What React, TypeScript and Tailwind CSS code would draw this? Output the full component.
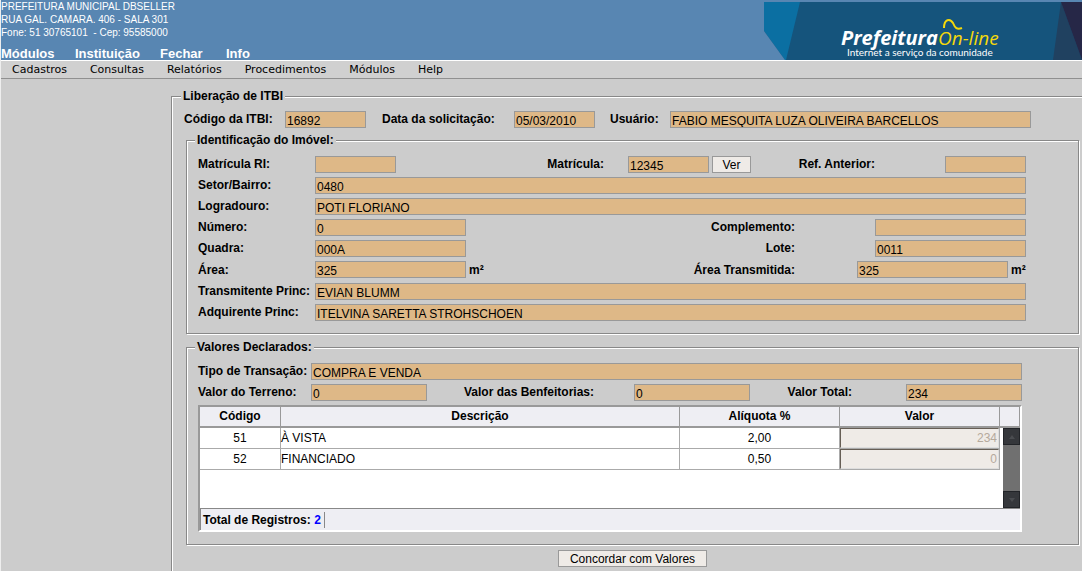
import type { InputHTMLAttributes, ReactNode } from 'react';

type FieldProps = InputHTMLAttributes<HTMLInputElement> & { id: string };

function Field({ className = '', ...rest }: FieldProps) {
  return (
    <input
      readOnly
      className={`h-[17px] min-w-0 rounded-none border border-[#999999] bg-[#deb887] px-px pt-[2px] text-[12px] leading-[13px] text-black outline-none ${className}`}
      {...rest}
    />
  );
}

function Label({ htmlFor, className = '', children }: { htmlFor: string; className?: string; children: ReactNode }) {
  return (
    <label htmlFor={htmlFor} className={`shrink-0 font-bold whitespace-nowrap ${className}`}>
      {children}
    </label>
  );
}

function Group({ title, className = '', children }: { title: string; className?: string; children: ReactNode }) {
  return (
    <fieldset
      className={`min-w-0 border border-[#888888] shadow-[1px_1px_0_#ffffff,inset_1px_1px_0_#ffffff] ${className}`}
    >
      <legend className="bg-[#cccccc] px-[2px] font-bold">{title}</legend>
      {children}
    </fieldset>
  );
}

function Banner() {
  return (
    <svg viewBox="0 0 318 58" className="h-[58px] w-[318px] shrink-0" role="img" aria-label="Prefeitura On-line">
      <rect width="318" height="58" fill="#15547c" />
      <polygon points="0,0 36,0 22,58 21,58 0,29" fill="#0b6fa2" />
      <polygon points="0,29 21,58 0,58" fill="#5886b2" />
      <polygon points="297,0 318,58 289,58" fill="#204160" />
      <polygon points="297,0 318,0 318,58" fill="#262747" />
      <text x="77" y="43" fill="#ffffff" fontFamily="Open Sans, sans-serif" fontSize="20" fontWeight="700" fontStyle="italic">
        Prefeitura
      </text>
      <text x="174" y="43" fill="#f5d90a" fontFamily="Open Sans, sans-serif" fontSize="19" fontStyle="italic">
        On-line
      </text>
      <path d="M180 26 C180 17 186 16 189 21 C191 26 193 28 198 26" fill="none" stroke="#f5d90a" strokeWidth="2" />
      <text x="83" y="54" fill="#ffffff" fontFamily="Lato, sans-serif" fontSize="10">
        Internet a serviço da comunidade
      </text>
    </svg>
  );
}

const entries = [
  { code: '51', description: 'À VISTA', rate: '2,00', value: '234' },
  { code: '52', description: 'FINANCIADO', rate: '0,50', value: '0' },
];

function ScrollButton({ label, path }: { label: string; path: string }) {
  return (
    <button
      type="button"
      aria-label={label}
      className="flex h-[17px] w-full items-center justify-center border border-[#222428] bg-[#35373b]"
    >
      <svg viewBox="0 0 6 4" className="h-1 w-1.5" fill="#4a4c50">
        <path d={path} />
      </svg>
    </button>
  );
}

function EntriesTable() {
  const head = 'border-r border-b-2 border-[#999999] bg-[#eeeef3] p-0 text-center font-bold';
  const cell = 'border-r border-b border-[#aaaaaa] p-0';
  return (
    <div className="mt-1 border-2 border-t-[#999999] border-r-white border-b-white border-l-[#999999] bg-white">
      <table className="w-full table-fixed border-separate border-spacing-0">
        <colgroup>
          <col className="w-[81px]" />
          <col />
          <col className="w-[160px]" />
          <col className="w-[160px]" />
          <col className="w-[20px]" />
        </colgroup>
        <thead>
          <tr className="h-[21px]">
            <th className={head}>Código</th>
            <th className={head}>Descrição</th>
            <th className={head}>Alíquota %</th>
            <th className={head}>Valor</th>
            <th className={head} aria-label="Rolagem" />
          </tr>
        </thead>
        <tbody>
          {entries.map((entry, index) => (
            <tr key={entry.code} className="h-[21px]">
              <td className={`${cell} text-center`}>{entry.code}</td>
              <td className={cell}>{entry.description}</td>
              <td className={`${cell} text-center`}>{entry.rate}</td>
              <td className={cell}>
                <input
                  disabled
                  aria-label={`Valor ${entry.description}`}
                  defaultValue={entry.value}
                  className="block h-5 w-full rounded-none border border-t-[#665e55] border-r-[#dddddd] border-b-[#dddddd] border-l-[#665e55] bg-[#efebe7] px-px text-right text-[12px] text-[#b5a99c]"
                />
              </td>
              {index === 0 && (
                <td rowSpan={3} className="p-0 pl-[3px]">
                  <div className="flex h-20 flex-col justify-between bg-[#707070]">
                    <ScrollButton label="Rolar para cima" path="M3 0 6 4H0Z" />
                    <ScrollButton label="Rolar para baixo" path="M0 0H6L3 4Z" />
                  </div>
                </td>
              )}
            </tr>
          ))}
          <tr className="h-[38px]">
            <td colSpan={4} className="p-0" />
          </tr>
        </tbody>
      </table>
      <div className="flex h-[22px] items-center border-t border-l border-[#888888] bg-[#eeeef3] pl-[2px] font-bold">
        <span className="border-r border-[#888888] pr-[3px] leading-4">
          Total de Registros: <span className="text-[#0000ff]">2</span>
        </span>
      </div>
    </div>
  );
}

export default function App() {
  const row = 'flex items-center h-[17px]';
  const button =
    'h-[17px] shrink-0 border border-[#999999] bg-[#efebe7] text-[12px] leading-[13px] pt-[2px] text-center text-black';
  return (
    <div className="flex min-h-screen flex-col overflow-hidden border-l border-[#eeeeee] bg-[#cccccc] font-['Liberation_Sans',Arial,sans-serif] text-[12px] leading-[13px] text-black">
      <header className="flex h-[60px] items-end justify-between bg-[#5886b2] text-white">
        <div className="h-full">
          <address className="text-[10px] leading-[13px] whitespace-pre not-italic">
            <div>PREFEITURA MUNICIPAL DBSELLER</div>
            <div>RUA GAL. CAMARA. 406 - SALA 301</div>
            <div>Fone: 51 30765101&nbsp; - Cep: 95585000</div>
          </address>
          <nav className="mt-2 flex text-[13px] leading-[14px] font-bold">
            <a href="#modulos" className="w-[74px]">Módulos</a>
            <a href="#instituicao" className="w-[85px]">Instituição</a>
            <a href="#fechar" className="w-[66px]">Fechar</a>
            <a href="#info">Info</a>
          </nav>
        </div>
        <Banner />
      </header>

      <nav className="flex h-[19px] items-center gap-[23px] border-t border-b border-t-white border-b-[#909090] bg-[#d0d0d0] pl-[11px] font-['DejaVu_Sans',sans-serif] text-[11px]">
        <a href="#cadastros">Cadastros</a>
        <a href="#consultas">Consultas</a>
        <a href="#relatorios">Relatórios</a>
        <a href="#procedimentos">Procedimentos</a>
        <a href="#menu-modulos">Módulos</a>
        <a href="#help">Help</a>
      </nav>

      <main className="flex grow flex-col pt-[11px] pl-[170px]">
        <Group title="Liberação de ITBI" className="grow border-r-0 border-b-0 pr-[3px] pl-[9px]">
          <form onSubmit={(event) => event.preventDefault()} className="pt-2 pl-[5px]">
            <div className={`${row} -ml-[2px]`}>
              <Label htmlFor="codigo" className="w-[101px]">Código da ITBI:</Label>
              <Field id="codigo" defaultValue="16892" className="w-[81px]" />
              <Label htmlFor="data" className="ml-4 w-[132px]">Data da solicitação:</Label>
              <Field id="data" defaultValue="05/03/2010" className="w-[81px]" />
              <Label htmlFor="usuario" className="ml-[15px] w-[60px]">Usuário:</Label>
              <Field id="usuario" defaultValue="FABIO MESQUITA LUZA OLIVEIRA BARCELLOS" className="mr-12 grow" />
            </div>

            <Group title="Identificação do Imóvel:" className="mt-[6px] pr-[52px] pb-3 pl-2">
              <div className="flex flex-col gap-1 pt-[9px] pl-[3px]">
                <div className={row}>
                  <Label htmlFor="matricula-ri" className="w-[117px]">Matrícula RI:</Label>
                  <Field id="matricula-ri" defaultValue="" className="w-[81px]" />
                  <Label htmlFor="matricula" className="grow pr-6 text-right">Matrícula:</Label>
                  <Field id="matricula" defaultValue="12345" className="w-[81px]" />
                  <button type="button" className={`${button} ml-[3px] w-[39px]`}>Ver</button>
                  <Label htmlFor="ref" className="w-[194px] pr-[70px] text-right">Ref. Anterior:</Label>
                  <Field id="ref" defaultValue="" className="w-[81px]" />
                </div>
                <div className={row}>
                  <Label htmlFor="setor" className="w-[117px]">Setor/Bairro:</Label>
                  <Field id="setor" defaultValue="0480" className="grow" />
                </div>
                <div className={row}>
                  <Label htmlFor="logradouro" className="w-[117px]">Logradouro:</Label>
                  <Field id="logradouro" defaultValue="POTI FLORIANO" className="grow" />
                </div>
                <div className={row}>
                  <Label htmlFor="numero" className="w-[117px]">Número:</Label>
                  <Field id="numero" defaultValue="0" className="w-[151px]" />
                  <Label htmlFor="complemento" className="grow pr-20 text-right">Complemento:</Label>
                  <Field id="complemento" defaultValue="" className="w-[151px]" />
                </div>
                <div className={row}>
                  <Label htmlFor="quadra" className="w-[117px]">Quadra:</Label>
                  <Field id="quadra" defaultValue="000A" className="w-[151px]" />
                  <Label htmlFor="lote" className="grow pr-20 text-right">Lote:</Label>
                  <Field id="lote" defaultValue="0011" className="w-[151px]" />
                </div>
                <div className="flex h-[18px] items-start leading-[18px]">
                  <Label htmlFor="area" className="w-[117px]">Área:</Label>
                  <Field id="area" defaultValue="325" className="w-[151px]" />
                  <span className="pl-[3px] font-bold">m²</span>
                  <Label htmlFor="area-transmitida" className="grow pr-[62px] text-right">Área Transmitida:</Label>
                  <Field id="area-transmitida" defaultValue="325" className="w-[151px]" />
                  <span className="w-[18px] pl-[3px] font-bold">m²</span>
                </div>
                <div className={row}>
                  <Label htmlFor="transmitente" className="w-[117px]">Transmitente Princ:</Label>
                  <Field id="transmitente" defaultValue="EVIAN BLUMM" className="grow" />
                </div>
                <div className={row}>
                  <Label htmlFor="adquirente" className="w-[117px]">Adquirente Princ:</Label>
                  <Field id="adquirente" defaultValue="ITELVINA SARETTA STROHSCHOEN" className="grow" />
                </div>
              </div>
            </Group>

            <Group title="Valores Declarados:" className="mt-[7px] pr-14 pb-3 pl-2">
              <div className="flex flex-col gap-1 pt-[9px] pl-[3px]">
                <div className={row}>
                  <Label htmlFor="tipo" className="w-[113px]">Tipo de Transação:</Label>
                  <Field id="tipo" defaultValue="COMPRA E VENDA" className="grow" />
                </div>
                <div className={row}>
                  <Label htmlFor="valor-terreno" className="w-[113px]">Valor do Terreno:</Label>
                  <Field id="valor-terreno" defaultValue="0" className="w-[116px]" />
                  <Label htmlFor="valor-benfeitorias" className="grow pr-10 text-right">Valor das Benfeitorias:</Label>
                  <Field id="valor-benfeitorias" defaultValue="0" className="w-[116px]" />
                  <Label htmlFor="valor-total" className="w-[156px] pr-[54px] text-right">Valor Total:</Label>
                  <Field id="valor-total" defaultValue="234" className="w-[116px]" />
                </div>
              </div>
              <div className="pl-[3px]">
                <EntriesTable />
              </div>
            </Group>

            <div className="flex justify-center pt-[5px]">
              <button type="submit" className={`${button} w-[149px]`}>Concordar com Valores</button>
            </div>
          </form>
        </Group>
      </main>
    </div>
  );
}
